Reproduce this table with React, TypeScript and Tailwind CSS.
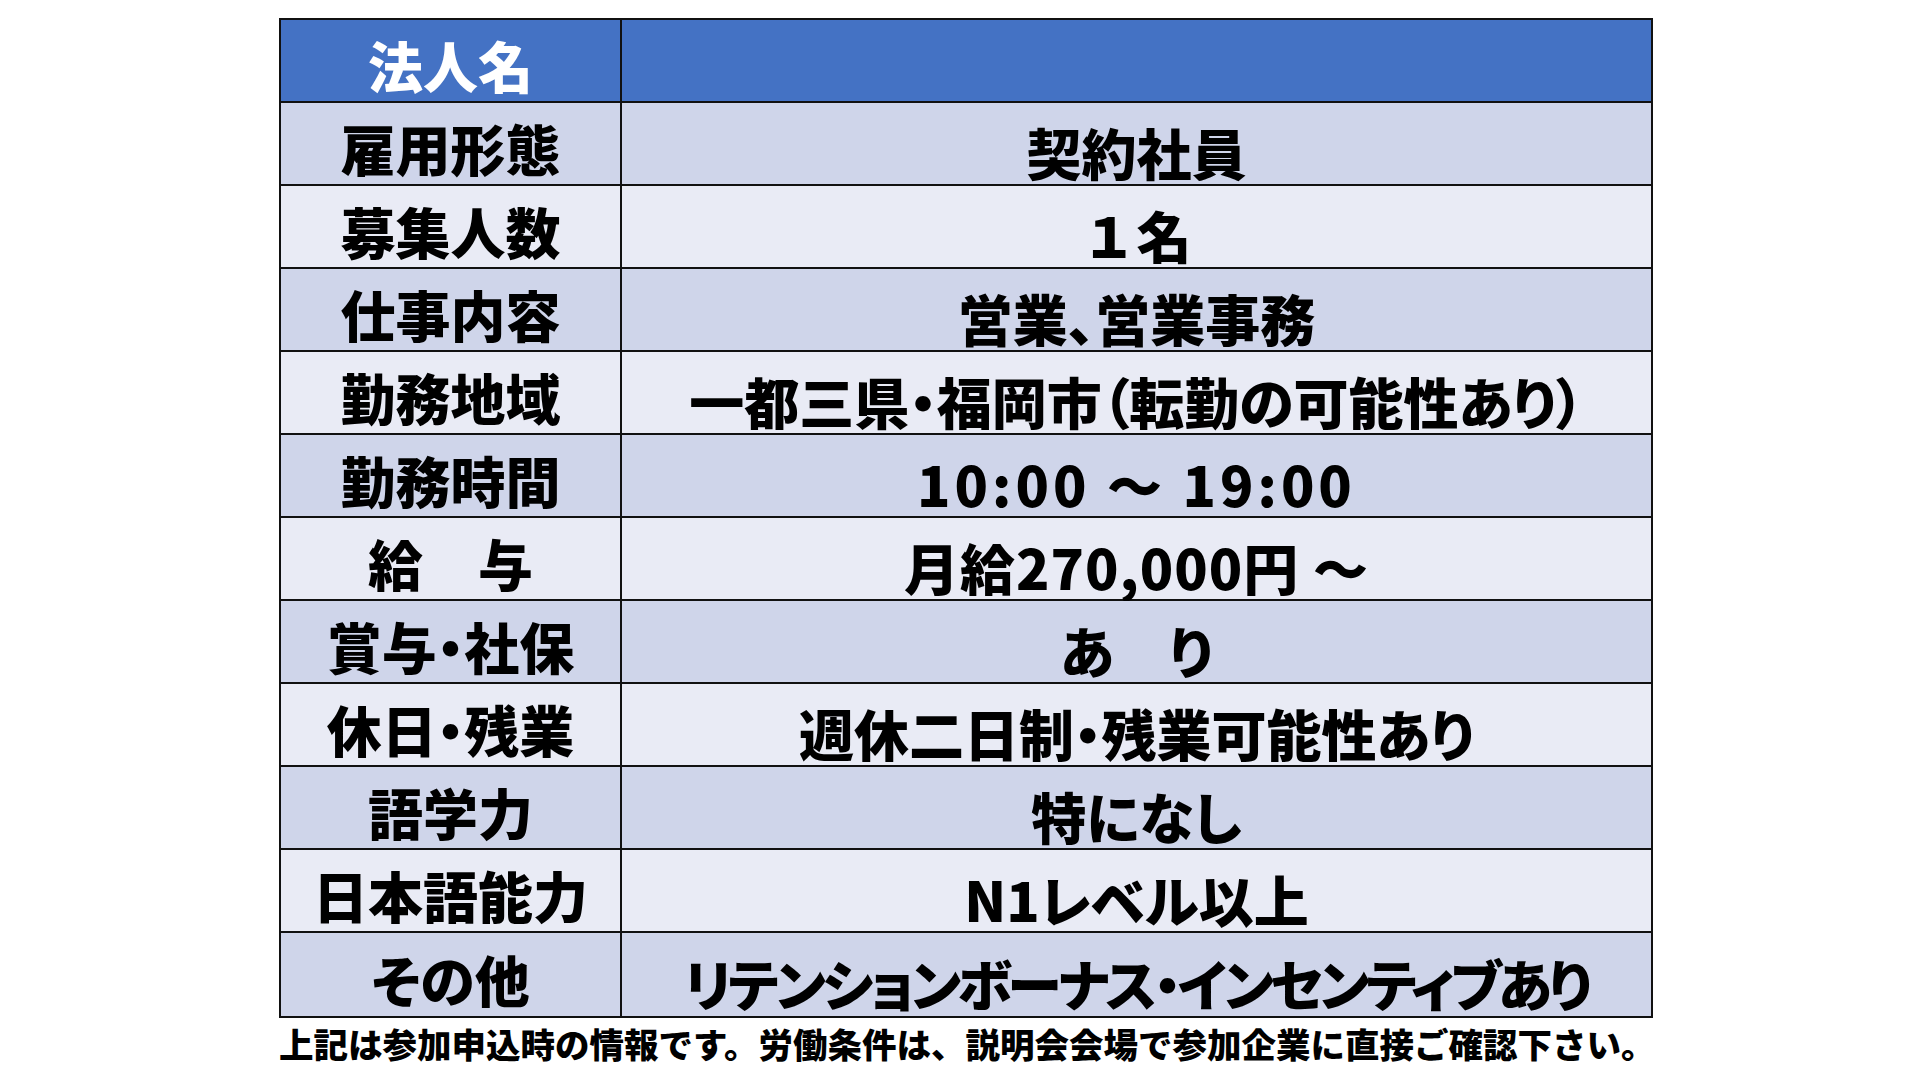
const rows: { label: string; value: string; extra?: string }[] = [
  { label: "雇用形態", value: "契約社員" },
  { label: "募集人数", value: "１名", extra: "[font-feature-settings:normal]" },
  { label: "仕事内容", value: "営業、営業事務" },
  { label: "勤務地域", value: "一都三県・福岡市（転勤の可能性あり）" },
  { label: "勤務時間", value: "10:00 ～ 19:00", extra: "tracking-[4px]" },
  { label: "給　与", value: "月給270,000円 ～", extra: "tracking-[1px]" },
  { label: "賞与・社保", value: "あ　り" },
  { label: "休日・残業", value: "週休二日制・残業可能性あり" },
  { label: "語学力", value: "特になし" },
  { label: "日本語能力", value: "N1レベル以上" },
  { label: "その他", value: "リテンションボーナス・インセンティブあり", extra: "tracking-[-3.5px]" },
];

export default function App() {
  return (
    <div className="min-h-screen w-full bg-white font-['Noto_Sans_CJK_JP','Noto_Sans',sans-serif] font-black text-black [font-feature-settings:'palt']">
      <div className="pl-[279px] pt-[18px]">
        <div className="grid w-[1374px] grid-cols-[341px_1fr] border-2 border-[#111]">
          {/* header row */}
          <div className="flex h-[83px] items-center justify-center border-b-2 border-r-2 border-[#111] bg-[#4472C4] pt-[8px] text-[55px] leading-none text-white">
            法人名
          </div>
          <div className="h-[83px] border-b-2 border-[#111] bg-[#4472C4]" />

          {rows.map((r, i) => {
            const last = i === rows.length - 1;
            const bg = i % 2 === 0 ? "bg-[#CFD5EA]" : "bg-[#E9EBF5]";
            return (
              <div key={r.label} className="contents">
                <div
                  className={`flex h-[83px] items-center justify-center border-r-2 border-[#111] pt-[8px] text-[55px] leading-none whitespace-nowrap ${bg} ${last ? "" : "border-b-2"}`}
                >
                  {r.label}
                </div>
                <div
                  className={`flex h-[83px] items-center justify-center border-[#111] pt-[16px] text-[55px] leading-none whitespace-nowrap ${bg} ${last ? "" : "border-b-2"}`}
                >
                  <span className={r.extra ?? ""}>{r.value}</span>
                </div>
              </div>
            );
          })}
        </div>
        <p className="mt-[8px] whitespace-nowrap text-[34.5px] leading-none [font-feature-settings:normal]">
          上記は参加申込時の情報です。労働条件は、説明会会場で参加企業に直接ご確認下さい。
        </p>
      </div>
    </div>
  );
}
